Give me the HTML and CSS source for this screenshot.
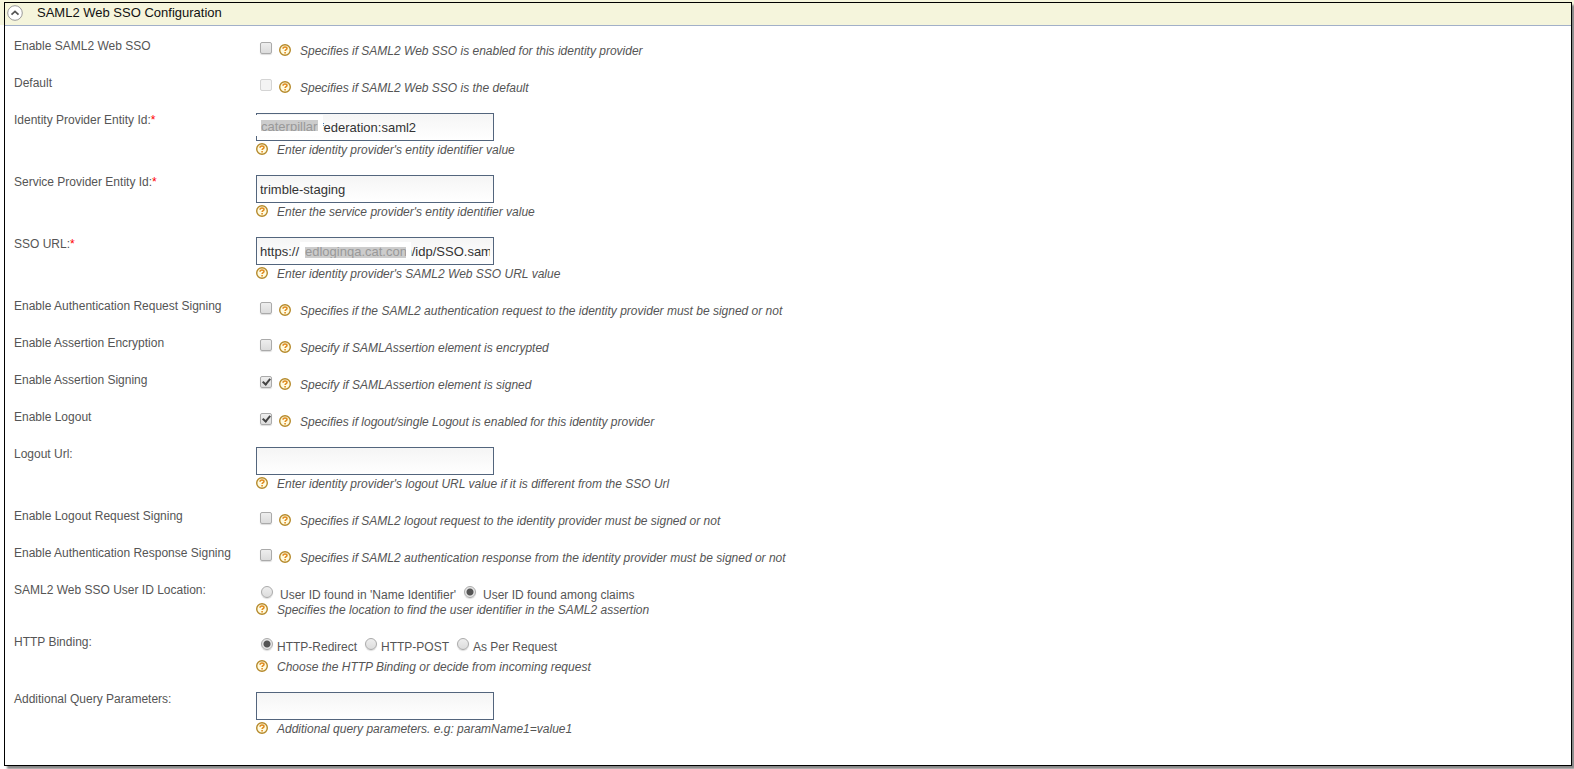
FILE: index.html
```html
<!DOCTYPE html>
<html lang="en">
<head>
<meta charset="utf-8">
<title>SAML2 Web SSO Configuration</title>
<link rel="stylesheet" href="styles.css">
</head>
<body>
<svg class="defs" aria-hidden="true">
  <symbol id="help" viewBox="0 0 12 12">
    <circle cx="6" cy="6" r="5.3" fill="#fffbe0" stroke="#b5892a" stroke-width="1.4"/>
    <path d="M4 4.7C4 3.5 4.9 2.9 6 2.9s2 .6 2 1.6c0 1.1-1.9 1.3-1.9 2.6" fill="none" stroke="#e08a1e" stroke-width="1.5"/>
    <path d="M5.3 8h1.6v1.4H5.3z" fill="#e08a1e"/>
  </symbol>
</svg>
<main class="panel">
  <header class="panel-head">
    <button class="toggle" type="button" aria-label="Collapse section">
      <svg viewBox="0 0 16 16"><circle cx="8" cy="8" r="7.3" fill="#fff" stroke="#999"/><path d="M4.5 9.6 8 6.4l3.5 3.2" fill="none" stroke="#555" stroke-width="1.8"/></svg>
    </button>
    <h1 class="title">SAML2 Web SSO Configuration</h1>
  </header>
  <form class="form">
    <div class="row">
      <label class="name" for="enable">Enable SAML2 Web SSO</label>
      <div class="check-line"><input class="check" type="checkbox" id="enable"><svg class="icon"><use href="#help"/></svg><span class="hint">Specifies if SAML2 Web SSO is enabled for this identity provider</span></div>
    </div>
    <div class="row">
      <label class="name" for="default">Default</label>
      <div class="check-line"><input class="check" type="checkbox" id="default" disabled><svg class="icon"><use href="#help"/></svg><span class="hint">Specifies if SAML2 Web SSO is the default</span></div>
    </div>
    <div class="row">
      <label class="name" for="idp">Identity Provider Entity Id:<span class="required">*</span></label>
      <div class="field">
        <input class="text" type="text" id="idp" value="caterpillar:federation:saml2">
        <span class="mask mask-idp"><span class="redacted">caterpillar:</span></span>
        <div class="help-line"><svg class="icon"><use href="#help"/></svg><span class="hint">Enter identity provider's entity identifier value</span></div>
      </div>
    </div>
    <div class="row">
      <label class="name" for="sp">Service Provider Entity Id:<span class="required">*</span></label>
      <div class="field">
        <input class="text" type="text" id="sp" value="trimble-staging">
        <div class="help-line"><svg class="icon"><use href="#help"/></svg><span class="hint">Enter the service provider's entity identifier value</span></div>
      </div>
    </div>
    <div class="row">
      <label class="name" for="sso">SSO URL:<span class="required">*</span></label>
      <div class="field">
        <input class="text" type="text" id="sso" value="https:// fedloginqa.cat.com/idp/SSO.saml2">
        <span class="mask mask-sso"><span class="redacted">edloginqa.cat.con</span></span>
        <div class="help-line"><svg class="icon"><use href="#help"/></svg><span class="hint">Enter identity provider's SAML2 Web SSO URL value</span></div>
      </div>
    </div>
    <div class="row">
      <label class="name" for="authreq">Enable Authentication Request Signing</label>
      <div class="check-line"><input class="check" type="checkbox" id="authreq"><svg class="icon"><use href="#help"/></svg><span class="hint">Specifies if the SAML2 authentication request to the identity provider must be signed or not</span></div>
    </div>
    <div class="row">
      <label class="name" for="enc">Enable Assertion Encryption</label>
      <div class="check-line"><input class="check" type="checkbox" id="enc"><svg class="icon"><use href="#help"/></svg><span class="hint">Specify if SAMLAssertion element is encrypted</span></div>
    </div>
    <div class="row">
      <label class="name" for="sign">Enable Assertion Signing</label>
      <div class="check-line"><input class="check" type="checkbox" id="sign" checked><svg class="icon"><use href="#help"/></svg><span class="hint">Specify if SAMLAssertion element is signed</span></div>
    </div>
    <div class="row">
      <label class="name" for="logout">Enable Logout</label>
      <div class="check-line"><input class="check" type="checkbox" id="logout" checked><svg class="icon"><use href="#help"/></svg><span class="hint">Specifies if logout/single Logout is enabled for this identity provider</span></div>
    </div>
    <div class="row">
      <label class="name" for="logouturl">Logout Url:</label>
      <div class="field">
        <input class="text" type="text" id="logouturl">
        <div class="help-line"><svg class="icon"><use href="#help"/></svg><span class="hint">Enter identity provider's logout URL value if it is different from the SSO Url</span></div>
      </div>
    </div>
    <div class="row">
      <label class="name" for="logoutreq">Enable Logout Request Signing</label>
      <div class="check-line"><input class="check" type="checkbox" id="logoutreq"><svg class="icon"><use href="#help"/></svg><span class="hint">Specifies if SAML2 logout request to the identity provider must be signed or not</span></div>
    </div>
    <div class="row">
      <label class="name" for="authres">Enable Authentication Response Signing</label>
      <div class="check-line"><input class="check" type="checkbox" id="authres"><svg class="icon"><use href="#help"/></svg><span class="hint">Specifies if SAML2 authentication response from the identity provider must be signed or not</span></div>
    </div>
    <div class="row" role="radiogroup" aria-labelledby="loc">
      <span class="name" id="loc">SAML2 Web SSO User ID Location:</span>
      <div class="choices">
        <div class="options location">
          <label class="option"><input class="radio" type="radio" name="loc"><span>User ID found in 'Name Identifier'</span></label>
          <label class="option"><input class="radio" type="radio" name="loc" checked><span>User ID found among claims</span></label>
        </div>
        <div class="help-line"><svg class="icon"><use href="#help"/></svg><span class="hint">Specifies the location to find the user identifier in the SAML2 assertion</span></div>
      </div>
    </div>
    <div class="row" role="radiogroup" aria-labelledby="bind">
      <span class="name" id="bind">HTTP Binding:</span>
      <div class="choices">
        <div class="options binding">
          <label class="option"><input class="radio" type="radio" name="bind" checked><span>HTTP-Redirect</span></label>
          <label class="option"><input class="radio" type="radio" name="bind"><span>HTTP-POST</span></label>
          <label class="option"><input class="radio" type="radio" name="bind"><span>As Per Request</span></label>
        </div>
        <div class="help-line"><svg class="icon"><use href="#help"/></svg><span class="hint">Choose the HTTP Binding or decide from incoming request</span></div>
      </div>
    </div>
    <div class="row">
      <label class="name" for="params">Additional Query Parameters:</label>
      <div class="field">
        <input class="text" type="text" id="params">
        <div class="help-line"><svg class="icon"><use href="#help"/></svg><span class="hint">Additional query parameters. e.g: paramName1=value1</span></div>
      </div>
    </div>
  </form>
</main>
</body>
</html>
```
FILE: styles.css
```css
*, *::before { box-sizing: border-box; }

body {
  margin: 0;
  padding: 2px 2px 3px 4px;
  min-height: 100vh;
  display: flex;
  background: linear-gradient(#f5f5dc 25px, #fff 25px);
  color: #555;
  font: 12px/16px "Liberation Sans", Arial, sans-serif;
}

.defs { position: absolute; width: 0; height: 0; }

.panel {
  flex: 1;
  border: 1px solid #000;
  background: #fff;
  box-shadow: 3px 3px 2px #888;
}

.panel-head {
  display: flex;
  align-items: center;
  gap: 14px;
  height: 23px;
  padding: 0 2px 2px;
  background: #f5f5dc;
  border-bottom: 1px solid #a2b0c8;
}

.toggle {
  width: 16px;
  height: 16px;
  padding: 0;
  border: 0;
  background: none;
}

.toggle svg { display: block; width: 16px; height: 16px; }

.title {
  margin: 0;
  color: #111;
  font-size: 13px;
  font-weight: normal;
}

.form {
  display: flex;
  flex-direction: column;
  gap: 16px;
  padding: 12px 9px 28px;
}

.row {
  display: grid;
  grid-template-columns: 242px 1fr;
  align-items: start;
}

.required { color: #f00; }

.check-line {
  display: flex;
  align-items: flex-start;
  padding: 4px 0 0 4px;
  height: 21px;
}

.check, .radio {
  appearance: none;
  flex: none;
  width: 12px;
  height: 12px;
  margin: 0;
  border: 1px solid #aaa;
  background: linear-gradient(#eee, #dcdcdc);
  box-shadow: 0 1px 1px #ddd;
}

.check { border-radius: 2px; }

.check:disabled { border-color: #d4d4d4; background: #f3f3f3; box-shadow: none; }

.check:checked::before {
  content: "";
  display: block;
  width: 5px;
  height: 8px;
  margin: 0 0 0 3px;
  border: solid #444;
  border-width: 0 2px 2px 0;
  transform: rotate(40deg);
}

.radio { border-radius: 50%; }

.radio:checked {
  background: radial-gradient(circle, #555 3px, #e6e6e6 4px);
}

.icon { flex: none; width: 12px; height: 12px; margin-top: 1px; }

.check-line .icon { margin: 2px 9px 0 7px; }

.check-line .hint { margin-top: 1px; }

.hint { font-style: italic; }

.field { position: relative; padding-top: 1px; }

.text {
  display: block;
  width: 238px;
  height: 28px;
  padding: 0 3px;
  border: 1px solid #53657d;
  border-radius: 0;
  background: linear-gradient(#f5f5f5, #fff);
  color: #333;
  font: 13px/16px "Liberation Sans", Arial, sans-serif;
}

.help-line { display: flex; gap: 9px; margin-top: 1px; }

.mask {
  position: absolute;
  padding: 5px 5px 0;
  background: #fff;
}

.mask-idp { top: 3px; left: 0; width: 67px; height: 21px; }

.mask-sso { top: 6px; left: 44px; width: 111px; height: 17px; }

.redacted {
  display: block;
  height: 11px;
  overflow: hidden;
  background: #ccc;
  color: #999;
  font-size: 13px;
  line-height: 14px;
  white-space: nowrap;
}

.mask-sso .redacted { line-height: 10px; }

.options { display: flex; height: 20px; padding: 4px 0 0 5px; }

.option { display: flex; }

.option span { padding-top: 1px; }

.location { gap: 8px; }

.location .radio { margin-right: 7px; }

.binding { gap: 8px; }

.binding .radio { margin-right: 4px; }

.choices .help-line { margin-top: 0; }

.choices .binding { height: 25px; }
```
